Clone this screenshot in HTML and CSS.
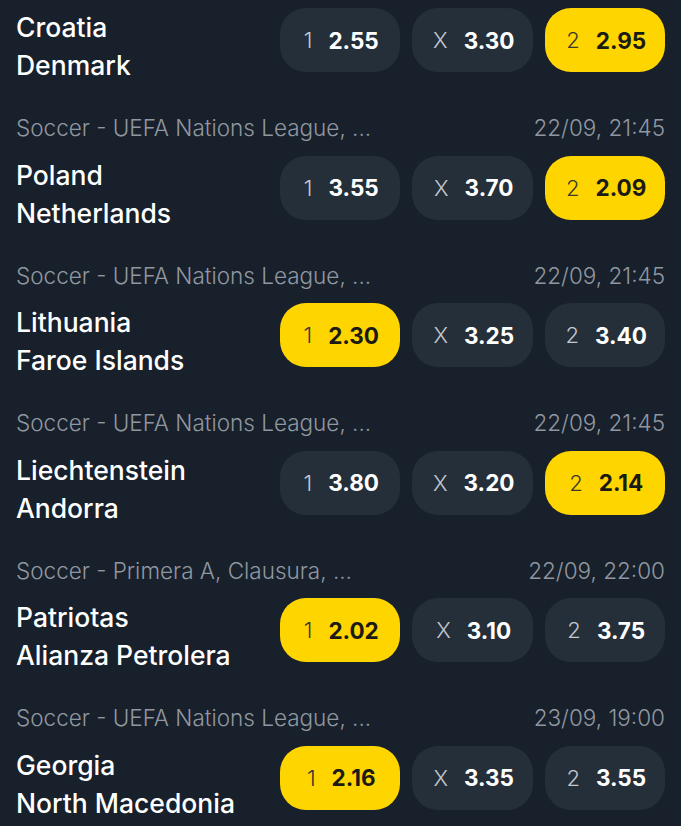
FILE: index.html
```html
<!DOCTYPE html>
<html lang="en">
<head>
    <meta charset="UTF-8">
    <meta name="viewport" content="width=device-width, initial-scale=1.0">
    <title>Soccer</title>
    <link rel="stylesheet" href="styles.css">
</head>
<body>

    <div class="events">
        <!-- первый матч обрезан сверху, без строки лиги -->
        <div class="event first">
            <div class="event-row">
                <div class="teams">
                    <div class="team">Croatia</div>
                    <div class="team">Denmark</div>
                </div>
                <div class="odds">
                    <button class="odd"><span class="label">1</span><span class="value">2.55</span></button>
                    <button class="odd"><span class="label">X</span><span class="value">3.30</span></button>
                    <button class="odd active"><span class="label">2</span><span class="value">2.95</span></button>
                </div>
            </div>
        </div>

        <div class="event">
            <div class="meta">
                <span class="league">Soccer - UEFA Nations League, ...</span>
                <span class="time">22/09, 21:45</span>
            </div>
            <div class="event-row">
                <div class="teams">
                    <div class="team">Poland</div>
                    <div class="team">Netherlands</div>
                </div>
                <div class="odds">
                    <button class="odd"><span class="label">1</span><span class="value">3.55</span></button>
                    <button class="odd"><span class="label">X</span><span class="value">3.70</span></button>
                    <button class="odd active"><span class="label">2</span><span class="value">2.09</span></button>
                </div>
            </div>
        </div>

        <div class="event">
            <div class="meta">
                <span class="league">Soccer - UEFA Nations League, ...</span>
                <span class="time">22/09, 21:45</span>
            </div>
            <div class="event-row">
                <div class="teams">
                    <div class="team">Lithuania</div>
                    <div class="team">Faroe Islands</div>
                </div>
                <div class="odds">
                    <button class="odd active"><span class="label">1</span><span class="value">2.30</span></button>
                    <button class="odd"><span class="label">X</span><span class="value">3.25</span></button>
                    <button class="odd"><span class="label">2</span><span class="value">3.40</span></button>
                </div>
            </div>
        </div>

        <div class="event">
            <div class="meta">
                <span class="league">Soccer - UEFA Nations League, ...</span>
                <span class="time">22/09, 21:45</span>
            </div>
            <div class="event-row">
                <div class="teams">
                    <div class="team">Liechtenstein</div>
                    <div class="team">Andorra</div>
                </div>
                <div class="odds">
                    <button class="odd"><span class="label">1</span><span class="value">3.80</span></button>
                    <button class="odd"><span class="label">X</span><span class="value">3.20</span></button>
                    <button class="odd active"><span class="label">2</span><span class="value">2.14</span></button>
                </div>
            </div>
        </div>

        <div class="event">
            <div class="meta">
                <span class="league">Soccer - Primera A, Clausura, ...</span>
                <span class="time">22/09, 22:00</span>
            </div>
            <div class="event-row">
                <div class="teams">
                    <div class="team">Patriotas</div>
                    <div class="team">Alianza Petrolera</div>
                </div>
                <div class="odds">
                    <button class="odd active"><span class="label">1</span><span class="value">2.02</span></button>
                    <button class="odd"><span class="label">X</span><span class="value">3.10</span></button>
                    <button class="odd"><span class="label">2</span><span class="value">3.75</span></button>
                </div>
            </div>
        </div>

        <div class="event">
            <div class="meta">
                <span class="league">Soccer - UEFA Nations League, ...</span>
                <span class="time">23/09, 19:00</span>
            </div>
            <div class="event-row">
                <div class="teams">
                    <div class="team">Georgia</div>
                    <div class="team">North Macedonia</div>
                </div>
                <div class="odds">
                    <button class="odd active"><span class="label">1</span><span class="value">2.16</span></button>
                    <button class="odd"><span class="label">X</span><span class="value">3.35</span></button>
                    <button class="odd"><span class="label">2</span><span class="value">3.55</span></button>
                </div>
            </div>
        </div>
    </div>

</body>
</html>
```

FILE: styles.css
```css
body {
    margin: 0;
    padding: 0;
    font-family: Inter, "Noto Sans", sans-serif;
    background-color: #17202b; /* тёмный фон */
    color: #ffffff;
    overflow: hidden;
}

.events {
    padding: 0 16px;
}

.event {
    padding-top: 20px;
    padding-bottom: 21.5px;
}

.event.first {
    padding-top: 8px;
}

.meta {
    display: flex;
    justify-content: space-between;
    align-items: center;
    height: 28px;
    margin-bottom: 14px;
    font-size: 22.5px;
    font-weight: 300;
    color: #9197a0; /* серый текст лиги */
}

.event-row {
    display: flex;
    justify-content: space-between;
    align-items: flex-start;
    height: 64px;
}

.teams {
    line-height: 38px;
    font-size: 26.5px;
    font-weight: 500;
}

.odds {
    display: flex;
    gap: 12px;
}

.odd {
    display: flex;
    align-items: center;
    justify-content: center;
    gap: 16px;
    width: 120.5px;
    height: 64px;
    padding: 0 0 0 3px;
    border: none;
    border-radius: 26px;
    background-color: #252f3a; /* тёмная кнопка */
    font-family: Inter, "Noto Sans", sans-serif;
    cursor: pointer;
}

.odd .label {
    font-size: 22px;
    font-weight: 300;
    color: #c3c8ce;
}

.odd .value {
    font-size: 22.5px;
    font-weight: 700;
    color: #ffffff;
}

/* выбранный исход */
.odd.active {
    background-color: #ffd500;
}

.odd.active .label {
    color: #3b3a2c;
}

.odd.active .value {
    color: #1b1b16;
}
```
